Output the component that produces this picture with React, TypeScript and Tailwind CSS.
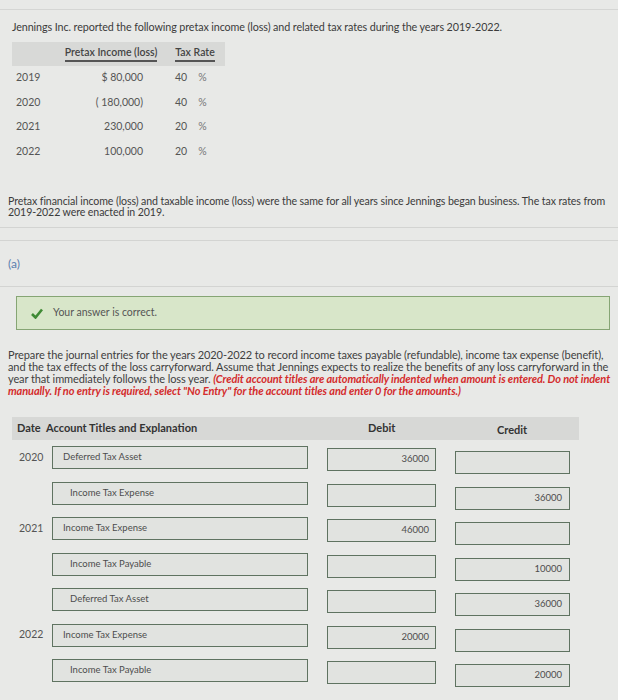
import React from "react";

const incomeRows = [
  { year: "2019", amount: "$ 80,000", rate: "40" },
  { year: "2020", amount: "( 180,000)", rate: "40" },
  { year: "2021", amount: "230,000", rate: "20" },
  { year: "2022", amount: "100,000", rate: "20" },
];

interface Entry {
  year?: string;
  account: string;
  debit?: string;
  credit?: string;
}

const entries: Entry[] = [
  { year: "2020", account: "Deferred Tax Asset", debit: "36000" },
  { account: "Income Tax Expense", credit: "36000" },
  { year: "2021", account: "Income Tax Expense", debit: "46000" },
  { account: "Income Tax Payable", credit: "10000" },
  { account: "Deferred Tax Asset", credit: "36000" },
  { year: "2022", account: "Income Tax Expense", debit: "20000" },
  { account: "Income Tax Payable", credit: "20000" },
];

function Box({ className, children }: { className: string; children?: React.ReactNode }) {
  return (
    <div className={`h-[23px] border-[1.5px] border-[#5f7361] bg-[#e1e3e0] flex items-center text-[9.5px] text-[#4d4d4d] ${className}`}>
      {children}
    </div>
  );
}

export default function App() {
  return (
    <div className="w-[618px] h-[700px] overflow-hidden bg-[#e8e9e7] font-['Lato','Liberation_Sans',sans-serif] text-[#3b3b3b]">
      <div className="pt-[9px]">
        <div className="border-t border-[#d5d6d4] px-[12px] pt-[10px]">
          <p className="text-[10.75px] leading-[14px] tracking-[-0.1px]">
            Jennings Inc. reported the following pretax income (loss) and related tax rates during the years 2019-2022.
          </p>

          <div className="mt-[8px] w-[213px]">
            <div className="h-[24px] bg-[#d8d9d7] grid grid-cols-[45px_108px_60px] items-center text-[10.5px] font-semibold text-[#444]">
              <div />
              <div className="flex justify-center">
                <span className="border-b-2 border-[#555] leading-[13px] pb-[1px]">Pretax Income (loss)</span>
              </div>
              <div className="flex justify-center">
                <span className="border-b-2 border-[#555] leading-[13px] pb-[1px]">Tax Rate</span>
              </div>
            </div>
            {incomeRows.map((r) => (
              <div key={r.year} className="h-[24.5px] grid grid-cols-[45px_108px_60px] items-center text-[10.5px] text-[#555]">
                <div className="pl-[4px]">{r.year}</div>
                <div className="text-right pr-[22px]">{r.amount}</div>
                <div className="flex pl-[10px] gap-[11px]">
                  <span>{r.rate}</span>
                  <span className="text-[#777]">%</span>
                </div>
              </div>
            ))}
          </div>
        </div>

        <p className="mt-[32px] pl-[8px] pr-[2px] text-[10.6px] leading-[11px] tracking-[-0.1px]">
          Pretax financial income (loss) and taxable income (loss) were the same for all years since Jennings began business. The tax rates from 2019-2022 were enacted in 2019.
        </p>

        <div className="mt-[9px] h-[14px] border-t border-b border-[#d3d4d2]" />
        <div className="h-[46px] border-b border-[#d3d4d2] flex items-center pl-[8px] text-[12px] text-[#5a7fae]">
          (a)
        </div>

        <div className="mt-[9px] ml-[16px] w-[594px] h-[34px] border-[1.5px] border-[#86a574] bg-[#d8e6c9] flex items-center pl-[14px] gap-[10px] text-[10.5px] text-[#555]">
          <svg width="12" height="11" viewBox="0 0 12 11">
            <path d="M1 6 L4.5 9.5 L11 1.5" stroke="#3f8a35" strokeWidth="2.6" fill="none" />
          </svg>
          <span>Your answer is correct.</span>
        </div>

        <p className="mt-[19px] pl-[8px] pr-[2px] text-[11px] leading-[12px] tracking-[-0.1px] text-[#3f3f3f]">
          Prepare the journal entries for the years 2020-2022 to record income taxes payable (refundable), income tax expense (benefit), and the tax effects of the loss carryforward. Assume that Jennings expects to realize the benefits of any loss carryforward in the year that immediately follows the loss year.{" "}
          <span className="font-bold italic text-[#d42c2c]">
            (Credit account titles are automatically indented when amount is entered. Do not indent
          </span>{" "}
          <span className="font-bold italic text-[#d42c2c]">
            manually. If no entry is required, select "No Entry" for the account titles and enter 0 for the amounts.)
          </span>
        </p>

        <div className="mt-[20px] ml-[12px] w-[567px] h-[23px] bg-[#d7d8d6] flex items-center text-[11px] font-bold text-[#333]">
          <span className="pl-[5px] w-[34px]">Date</span>
          <span className="w-[322px]">Account Titles and Explanation</span>
          <span className="w-[129px]">Debit</span>
          <span className="mt-[4px]">Credit</span>
        </div>

        <div className="mt-[6px]">
          {entries.map((e, i) => (
            <div key={i} className="h-[35.5px] flex items-start">
              <div className="w-[52px] h-[23px] flex items-center pl-[19px] text-[10.5px] text-[#555]">{e.year}</div>
              <Box className={`w-[256px] ${e.debit ? "pl-[10px]" : "pl-[17px]"}`}>{e.account}</Box>
              <Box className="ml-[19px] w-[109px] justify-end pr-[6px] mt-[2px]">{e.debit}</Box>
              <Box className="ml-[19px] w-[115px] justify-end pr-[7px] mt-[5px]">{e.credit}</Box>
            </div>
          ))}
        </div>
      </div>
    </div>
  );
}
